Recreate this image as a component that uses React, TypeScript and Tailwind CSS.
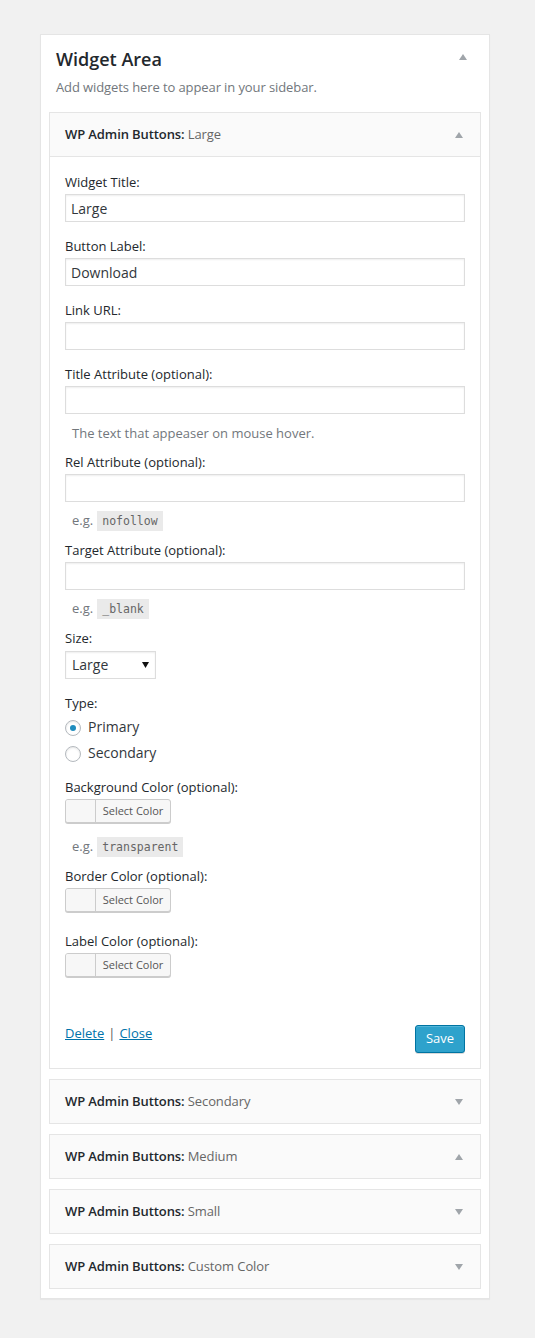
import React from 'react'

// small triangle toggle used in sidebar and widget headers
function Arrow({ up }: { up?: boolean }) {
  return (
    <svg width="8" height="6" viewBox="0 0 8 6" className="block">
      {up ? <polygon points="0,6 8,6 4,0" fill="#a0a5aa" /> : <polygon points="0,0 8,0 4,6" fill="#a0a5aa" />}
    </svg>
  )
}

function WidgetHeader({ name, up }: { name: string; up?: boolean }) {
  return (
    <div className="h-[45px] border border-[#e5e5e5] bg-[#fafafa] flex items-center justify-between pl-[15px] pr-[17px]">
      <div className="text-[13px] tracking-[-0.1px] font-semibold text-[#23282d]">
        WP Admin Buttons: <span className="font-normal text-[#666]">{name}</span>
      </div>
      <Arrow up={up} />
    </div>
  )
}

function Label({ children, className = '' }: { children: React.ReactNode; className?: string }) {
  return <div className={`text-[13px] leading-[20px] text-[#23282d] ${className}`}>{children}</div>
}

function TextInput({ value = '' }: { value?: string }) {
  return (
    <div className="mt-[2px] h-[28px] w-full border border-[#ddd] bg-white shadow-[inset_0_1px_2px_rgba(0,0,0,0.07)] px-[5px] text-[14px] leading-[27px] text-[#32373c]">
      {value}
    </div>
  )
}

function Example({ code, className = '' }: { code: string; className?: string }) {
  return (
    <div className={`flex items-center h-[20px] pl-[7px] text-[13px] text-[#72777c] ${className}`}>
      <span>e.g.</span>
      <code className="ml-[4px] h-[20px] px-[5px] bg-[#eaeaea] text-[#666] font-['DejaVu_Sans_Mono',monospace] text-[11.5px] leading-[20px]">
        {code}
      </code>
    </div>
  )
}

function ColorButton() {
  return (
    <div className="mt-[2px] flex h-[24px] w-[106px] border border-[#ccc] rounded-[3px] bg-[#f7f7f7] shadow-[0_1px_0_#ccc] overflow-hidden">
      <div className="w-[30px] border-r border-[#ccc] bg-[#f7f7f7]" />
      <div className="flex-1 text-center text-[11px] leading-[22px] text-[#555]">Select Color</div>
    </div>
  )
}

function Radio({ label, checked }: { label: string; checked?: boolean }) {
  return (
    <div className="flex items-center h-[26px]">
      <div className="w-[16px] h-[16px] rounded-full border border-[#b4b9be] bg-white shadow-[inset_0_1px_2px_rgba(0,0,0,0.1)] flex items-center justify-center">
        {checked && <div className="w-[6px] h-[6px] rounded-full bg-[#1e8cbe]" />}
      </div>
      <span className="ml-[7px] text-[14px] leading-[20px] -mt-[2px] text-[#32373c]">{label}</span>
    </div>
  )
}

export default function App() {
  return (
    <div className="min-h-screen bg-[#f1f1f1] pt-[34px] pl-[40px] font-['Open_Sans',sans-serif]">
      {/* Sidebar panel */}
      <div className="w-[450px] border border-[#e5e5e5] bg-white shadow-[0_1px_1px_rgba(0,0,0,0.04)]">
        <div className="relative px-[15px]">
          <div className="pt-[12px] text-[18px] leading-[24px] font-semibold text-[#23282d]">Widget Area</div>
          <div className="mt-[6px] text-[13px] tracking-[-0.1px] leading-[20px] text-[#72777c]">Add widgets here to appear in your sidebar.</div>
          <div className="absolute right-[22px] top-[19px]">
            <Arrow up />
          </div>
        </div>

        <div className="mx-[8px] mt-[15px] pb-[9px] flex flex-col gap-[10px]">
          {/* Open widget */}
          <div>
            <WidgetHeader name="Large" up />
            <div className="border-x border-b border-[#e5e5e5] bg-white px-[15px] pt-[15px] pb-[15px]">
              <Label>Widget Title:</Label>
              <TextInput value="Large" />

              <Label className="mt-[14px]">Button Label:</Label>
              <TextInput value="Download" />

              <Label className="mt-[14px]">Link URL:</Label>
              <TextInput />

              <Label className="mt-[14px]">Title Attribute (optional):</Label>
              <TextInput />
              <div className="mt-[9px] pl-[7px] text-[13px] leading-[20px] text-[#72777c]">The text that appeaser on mouse hover.</div>

              <Label className="mt-[9px]">Rel Attribute (optional):</Label>
              <TextInput />
              <Example code="nofollow" className="mt-[9px]" />

              <Label className="mt-[9px]">Target Attribute (optional):</Label>
              <TextInput />
              <Example code="_blank" className="mt-[9px]" />

              <Label className="mt-[9px]">Size:</Label>
              <div className="mt-[3px] h-[28px] w-[91px] border border-[#ddd] bg-white shadow-[inset_0_1px_2px_rgba(0,0,0,0.07)] flex items-center justify-between pl-[6px] pr-[6px]">
                <span className="text-[14px] -mt-[1px] text-[#32373c]">Large</span>
                <svg width="7" height="6" viewBox="0 0 7 6">
                  <polygon points="0,0 7,0 3.5,6" fill="#111" />
                </svg>
              </div>

              <Label className="mt-[14px]">Type:</Label>
              <div className="mt-[2px]">
                <Radio label="Primary" checked />
                <Radio label="Secondary" />
              </div>

              <Label className="mt-[10px]">Background Color (optional):</Label>
              <ColorButton />
              <Example code="transparent" className="mt-[14px]" />

              <Label className="mt-[9px]">Border Color (optional):</Label>
              <ColorButton />

              <Label className="mt-[19px]">Label Color (optional):</Label>
              <ColorButton />

              <div className="mt-[46px] flex items-start justify-between">
                <div className="text-[13px] leading-[20px] text-[#555]">
                  <a className="text-[#0073aa] underline">Delete</a>
                  <span className="mx-[4px]">|</span>
                  <a className="text-[#0073aa] underline">Close</a>
                </div>
                <button className="mt-[2px] h-[28px] w-[50px] rounded-[3px] border border-[#0074a2] bg-[#2ea2cc] text-[13px] text-white shadow-[inset_0_1px_0_rgba(120,200,230,0.5),0_1px_0_rgba(0,0,0,0.15)]">
                  Save
                </button>
              </div>
            </div>
          </div>

          <WidgetHeader name="Secondary" />
          <WidgetHeader name="Medium" up />
          <WidgetHeader name="Small" />
          <WidgetHeader name="Custom Color" />
        </div>
      </div>
    </div>
  )
}
